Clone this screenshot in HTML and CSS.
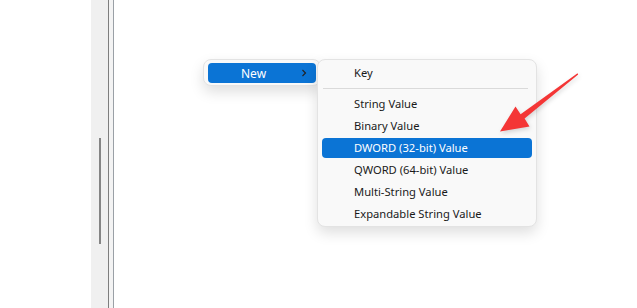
FILE: index.html
```html
<!DOCTYPE html>
<html>
<head>
<meta charset="utf-8">
<link rel="stylesheet" href="styles.css">
</head>
<body>
<div class="page">
  <div class="left-pane"></div>
  <div class="scroll-track"><div class="scroll-thumb"></div></div>
  <div class="split"><div class="split-line"></div><div class="split-gap"></div><div class="split-line light"></div></div>
  <div class="right-pane"></div>
</div>

<div class="menu menu-main">
  <div class="item active">
    <span class="label">New</span>
    <svg class="chev" width="6" height="8" viewBox="0 0 6 8"><path d="M1.5 1 L4.5 4 L1.5 7" fill="none" stroke="#222" stroke-width="1.1"/></svg>
  </div>
</div>

<div class="menu menu-sub">
  <div class="item">Key</div>
  <div class="sep"></div>
  <div class="item">String Value</div>
  <div class="item">Binary Value</div>
  <div class="item active">DWORD (32-bit) Value</div>
  <div class="item">QWORD (64-bit) Value</div>
  <div class="item">Multi-String Value</div>
  <div class="item last">Expandable String Value</div>
</div>

<svg class="arrow" width="637" height="308" viewBox="0 0 637 308">
  <polygon points="577.5,73.2 578.2,74.6 524.6,118.6 529.5,126.5 500,131.5 515.5,106.5 520.6,114.2" fill="#f43636"/>
</svg>
</body>
</html>
```

FILE: styles.css
```css
html, body {
  margin: 0;
  padding: 0;
  background: #ffffff;
  font-family: "Noto Sans", "Open Sans", sans-serif;
}
.page {
  display: flex;
  width: 637px;
  height: 308px;
}
.left-pane {
  width: 91px;
  background: #ffffff;
}
.scroll-track {
  width: 17px;
  background: #f0f0f0;
  display: flex;
  justify-content: center;
  padding-top: 138px;
  box-sizing: border-box;
}
.scroll-thumb {
  width: 2px;
  height: 106px;
  background: #858585;
  margin-left: 1px;
}
.split {
  display: flex;
}
.split-line {
  width: 1px;
  background: #7e7e7e;
}
.split-line.light {
  background: #9aa0a6;
}
.split-gap {
  width: 4px;
  background: #f3f3f3;
}
.right-pane {
  flex: 1;
  background: #ffffff;
}
.menu {
  position: absolute;
  background: #f9f9f9;
  border: 1px solid #e3e3e3;
  border-radius: 8px;
  box-shadow: 0 6px 14px rgba(0,0,0,0.13);
  box-sizing: border-box;
  font-size: 11.2px;
  color: #1a1a1a;
}
.menu-main {
  left: 203px;
  top: 59px;
  width: 118px;
  padding: 3px 4px 2px 4px;
}
.menu-main .item {
  height: 20px;
  display: flex;
  align-items: center;
  border-radius: 4px;
  padding-left: 33px;
  padding-right: 9px;
  justify-content: space-between;
  font-size: 12px;
}
.menu-sub {
  left: 317px;
  top: 59px;
  width: 220px;
  padding: 3px 4px 2px 4px;
  display: flex;
  flex-direction: column;
  gap: 2px;
}
.menu-sub .item {
  height: 20px;
  line-height: 20px;
  padding-left: 32px;
  border-radius: 4px;
  white-space: nowrap;
}
.item.active {
  background: #0b74d5;
  color: #ffffff;
}
.sep {
  height: 1px;
  background: #dadada;
  margin: 3px 4px 3px 1px;
}
.arrow {
  position: absolute;
  left: 0;
  top: 0;
  filter: drop-shadow(1px 2px 2px rgba(0,0,0,0.15));
}
```
